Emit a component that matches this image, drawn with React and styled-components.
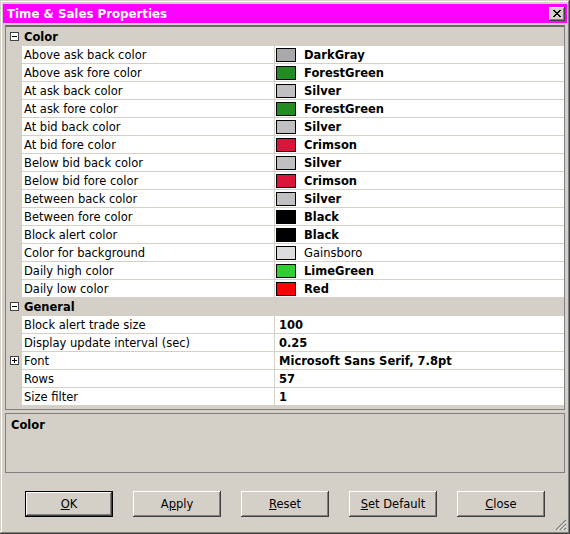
import React from 'react'
import styled, { createGlobalStyle } from 'styled-components'

const GlobalStyle = createGlobalStyle`
html, body {
  margin: 0;
  padding: 0;
  overflow: hidden;
  background: #d4d0c8;
}
`

const Window = styled.div`
position: relative;
width: 570px;
height: 534px;
box-sizing: border-box;
padding: 4px 3px 3px 3px;
background: #d4d0c8;
display: flex;
flex-direction: column;
font-family: "DejaVu Sans", sans-serif;
font-size: 11.5px;
color: #000;
box-shadow: inset -1px -1px 0 #404040, inset 1px 1px 0 #d4d0c8,
  inset -2px -2px 0 #808080, inset 2px 2px 0 #fff;
`

const TitleBar = styled.div`
height: 19px;
background: #ff00ff;
display: flex;
align-items: center;
justify-content: space-between;
padding: 0 2px 0 4px;
color: #fff;
font-weight: bold;
font-size: 11.8px;
`

const CloseButton = styled.div`
width: 16px;
height: 14px;
box-sizing: border-box;
background: #d4d0c8;
display: flex;
align-items: center;
justify-content: center;
box-shadow: inset -1px -1px 0 #404040, inset 1px 1px 0 #fff,
  inset -2px -2px 0 #808080;
`

const Body = styled.div`
flex: 1;
display: flex;
flex-direction: column;
padding: 2px 2px 0 2px;
`

const Grid = styled.div`
border: 1px solid #808080;
border-top: 2px solid #6a6a6a;
background: #d4d0c8;
padding: 1px 0 3px 0;
`

const Row = styled.div`
height: 18px;
box-sizing: border-box;
display: grid;
grid-template-columns: 16px 253px 1fr;
border-bottom: 1px solid #d4d0c8;
line-height: 15px;
background: ${p => (p.category ? '#d4d0c8' : 'transparent')};
`

const Gutter = styled.div`
display: flex;
align-items: center;
justify-content: center;
`

const Toggle = styled.div`
position: relative;
width: 9px;
height: 9px;
box-sizing: border-box;
border: 1px solid #404040;
background: #fff;
&::before {
  content: '';
  position: absolute;
  left: 1px;
  top: 3px;
  width: 5px;
  height: 1px;
  background: #000;
}
&::after {
  content: '';
  display: ${p => (p.open ? 'none' : 'block')};
  position: absolute;
  left: 3px;
  top: 1px;
  width: 1px;
  height: 5px;
  background: #000;
}
`

const Label = styled.div`
padding: 2px 0 0 2px;
white-space: nowrap;
background: ${p => (p.category ? 'transparent' : '#fff')};
border-right: ${p => (p.category ? 'none' : '1px solid #d4d0c8')};
font-weight: ${p => (p.category ? 'bold' : 'normal')};
`

const Value = styled.div`
display: flex;
align-items: center;
padding: 2px 0 0 ${p => (p.swatch ? '1px' : '4px')};
background: ${p => (p.category ? 'transparent' : '#fff')};
font-weight: ${p => (p.plain ? 'normal' : 'bold')};
white-space: nowrap;
`

const Swatch = styled.span`
width: 20px;
height: 14px;
box-sizing: border-box;
border: 1px solid #000;
background: ${p => p.color};
margin: -2px 8px 0 0;
`

const Desc = styled.div`
margin-top: 3px;
height: 60px;
box-sizing: border-box;
border: 1px solid #808080;
padding: 4px 5px;
font-weight: bold;
`

const Buttons = styled.div`
margin-top: 18px;
display: flex;
justify-content: center;
gap: 20px;
`

const Button = styled.button`
width: 88px;
height: 26px;
padding: 0;
background: #d4d0c8;
font-family: "DejaVu Sans", sans-serif;
font-size: 11.5px;
color: #000;
border: ${p => (p.primary ? '1px solid #000' : 'none')};
box-shadow: inset -1px -1px 0 #404040, inset 1px 1px 0 #fff,
  inset -2px -2px 0 #808080;
`

const Grip = styled.svg`
position: absolute;
right: 3px;
bottom: 3px;
`

const colors = [
  ['Above ask back color', '#a9a9a9', 'DarkGray'],
  ['Above ask fore color', '#228b22', 'ForestGreen'],
  ['At ask back color', '#c0c0c0', 'Silver'],
  ['At ask fore color', '#228b22', 'ForestGreen'],
  ['At bid back color', '#c0c0c0', 'Silver'],
  ['At bid fore color', '#dc143c', 'Crimson'],
  ['Below bid back color', '#c0c0c0', 'Silver'],
  ['Below bid fore color', '#dc143c', 'Crimson'],
  ['Between back color', '#c0c0c0', 'Silver'],
  ['Between fore color', '#000000', 'Black'],
  ['Block alert color', '#000000', 'Black'],
  ['Color for background', '#dcdcdc', 'Gainsboro', true],
  ['Daily high color', '#32cd32', 'LimeGreen'],
  ['Daily low color', '#ff0000', 'Red'],
]

const general = [
  ['Block alert trade size', '100'],
  ['Display update interval (sec)', '0.25'],
  ['Font', 'Microsoft Sans Serif, 7.8pt', true],
  ['Rows', '57'],
  ['Size filter', '1'],
]

function Category({ name }) {
  return (
    <Row category>
      <Gutter><Toggle open /></Gutter>
      <Label category>{name}</Label>
      <Value category />
    </Row>
  )
}

export default function App() {
  return (
    <Window>
      <GlobalStyle />
      <TitleBar>
        <span>Time &amp; Sales Properties</span>
        <CloseButton>
          <svg width="8" height="7" viewBox="0 0 8 7" shapeRendering="crispEdges">
            <path d="M0 0h2v1h-2zM6 0h2v1h-2zM1 1h2v1h-2zM5 1h2v1h-2zM2 2h4v1h-4zM3 3h2v1h-2zM2 4h4v1h-4zM1 5h2v1h-2zM5 5h2v1h-2zM0 6h2v1h-2zM6 6h2v1h-2z" fill="#000" />
          </svg>
        </CloseButton>
      </TitleBar>
      <Body>
        <Grid>
          <Category name="Color" />
          {colors.map(([label, color, name, plain]) => (
            <Row key={label}>
              <Gutter />
              <Label>{label}</Label>
              <Value swatch plain={plain}>
                <Swatch color={color} />
                {name}
              </Value>
            </Row>
          ))}
          <Category name="General" />
          {general.map(([label, value, expandable]) => (
            <Row key={label}>
              <Gutter>{expandable && <Toggle />}</Gutter>
              <Label>{label}</Label>
              <Value>{value}</Value>
            </Row>
          ))}
        </Grid>
        <Desc>Color</Desc>
        <Buttons>
          <Button primary><u>O</u>K</Button>
          <Button>A<u>p</u>ply</Button>
          <Button><u>R</u>eset</Button>
          <Button><u>S</u>et Default</Button>
          <Button><u>C</u>lose</Button>
        </Buttons>
      </Body>
      <Grip width="12" height="12" viewBox="0 0 12 12">
        <path d="M11 1L1 11M11 5L5 11M11 9L9 11" stroke="#808080" strokeWidth="1.4" />
        <path d="M11 2.4L2.4 11M11 6.4L6.4 11M11 10.4L10.4 11" stroke="#fff" strokeWidth="0.8" />
      </Grip>
    </Window>
  )
}
